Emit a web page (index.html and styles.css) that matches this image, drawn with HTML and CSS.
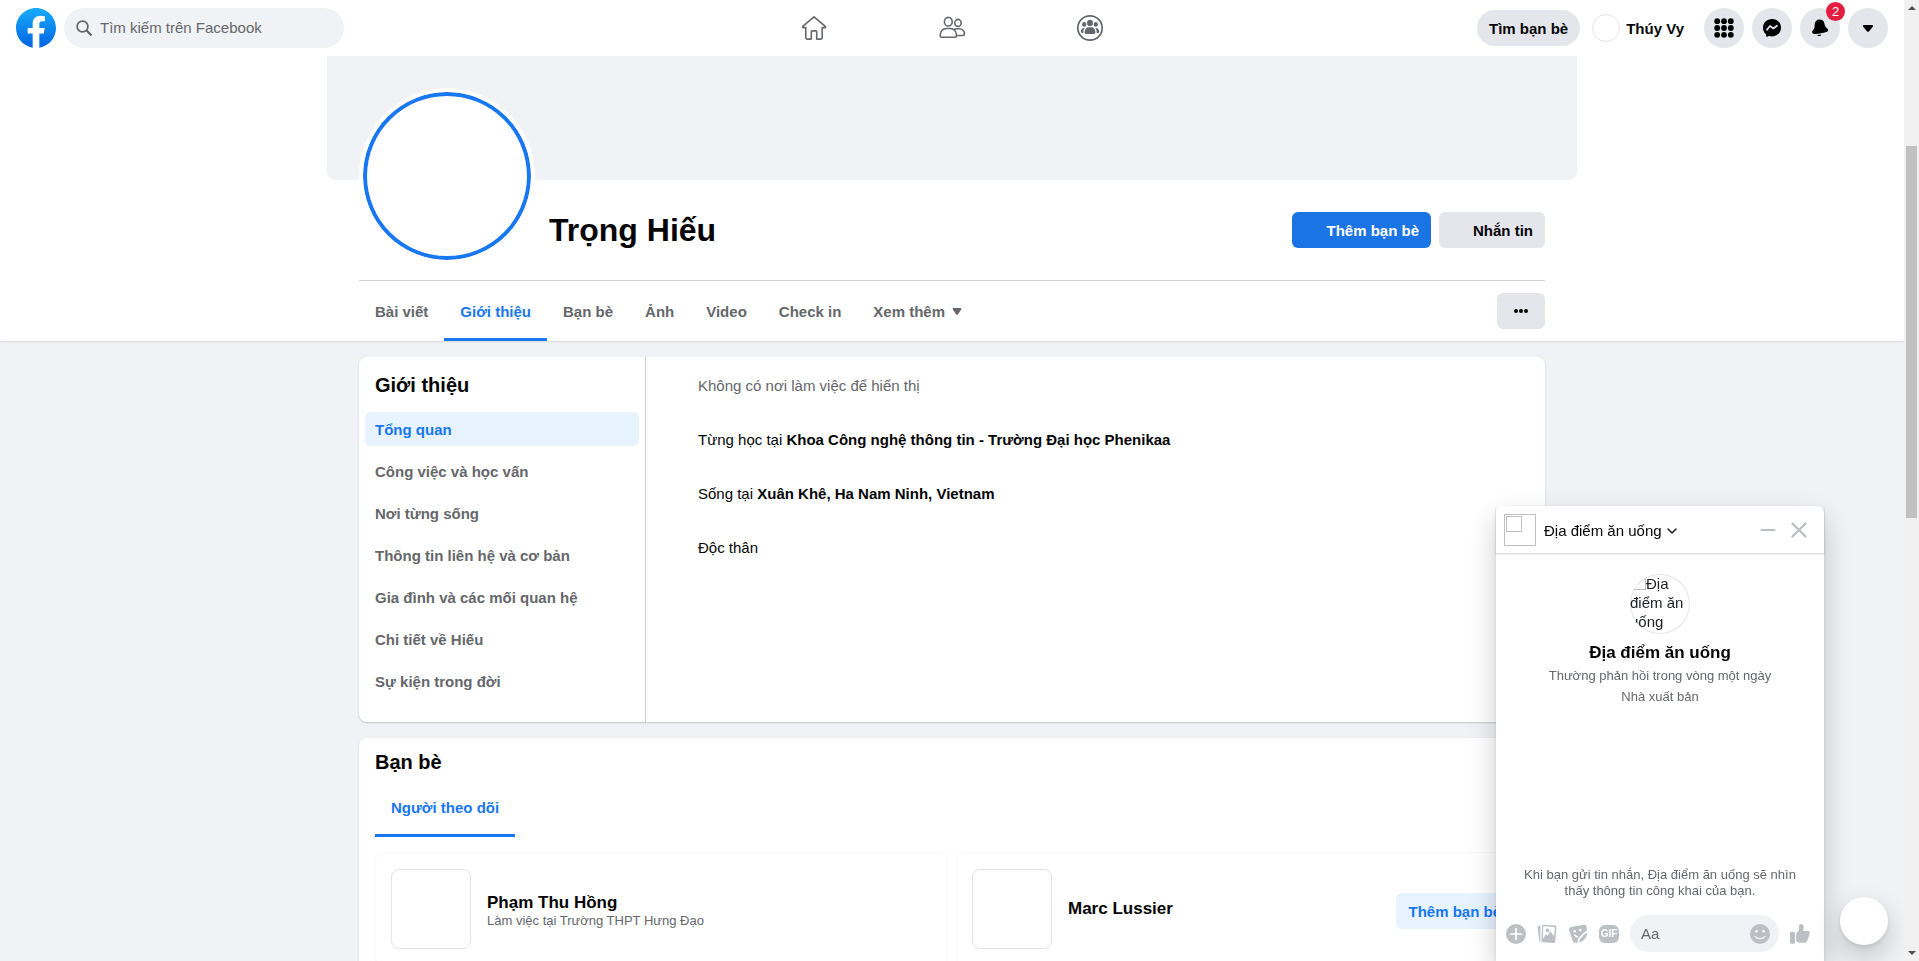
FILE: index.html
```html
<!DOCTYPE html>
<html lang="vi">
<head>
<meta charset="utf-8">
<meta name="viewport" content="width=device-width, initial-scale=1">
<title>Trọng Hiếu | Facebook</title>
<link rel="stylesheet" href="styles.css">
</head>
<body>
<div class="app">
  <div class="page">
    <header class="topbar">
      <div class="topbar-left">
        <a href="#" class="logo" aria-label="Facebook">
          <svg viewBox="0 0 36 36" width="40" height="40">
            <defs><linearGradient id="brand" x1="0" y1="0" x2="0" y2="1"><stop offset="0" stop-color="#18acfe"/><stop offset="1" stop-color="#0163e0"/></linearGradient></defs>
            <path fill="url(#brand)" d="M15 35.8C6.500 34.300 0 26.900 0 18 0 8.100 8.100 0 18 0s18 8.100 18 18c0 8.900-6.500 16.300-15 17.800l-1-.8h-4l-1 .8z"/>
            <path fill="#fff" d="M25 23l.8-5H21v-3.500c0-1.400.5-2.500 2.700-2.500H26V7.400c-1.300-.2-2.700-.4-4-.4-4.100 0-7 2.500-7 7v4h-4.500v5H15v12.700c1 .2 2 .3 3 .3s2-.1 3-.3V23h4z"/>
          </svg>
        </a>
        <label class="search">
          <svg viewBox="0 0 16 16" width="16" height="16" fill="none" stroke="#65676b" stroke-width="1.700" stroke-linecap="round"><ellipse cx="6.500" cy="6.500" rx="5.400" ry="5.400"/><path d="M10.800 10.800l4 4" stroke-width="2.300"/></svg>
          <input type="text" placeholder="Tìm kiếm trên Facebook" aria-label="Tìm kiếm trên Facebook">
        </label>
      </div>
      <nav class="topnav">
        <a href="#" aria-label="Trang chủ"><svg viewBox="0 0 28 28" width="28" height="28" fill="none" stroke="#65676b" stroke-width="1.600" stroke-linejoin="round"><path d="M14 2.800L2.700 12.400c-.5.400-.2 1.200.4 1.200h2.700v10.200c0 .9.400 1.300 1.300 1.300h4.200v-7.300c0-.6.300-.9.900-.9h3.600c.6 0 .9.300.9.900v7.300h4.200c.9 0 1.300-.4 1.300-1.300V13.600h2.700c.6 0 .9-.8.4-1.200z"/></svg></a>
        <a href="#" aria-label="Bạn bè"><svg viewBox="0 0 28 28" width="28" height="28" fill="none" stroke="#65676b" stroke-width="1.600"><ellipse cx="10.300" cy="7.700" rx="3.900" ry="4.300"/><ellipse cx="20" cy="8.900" rx="3.200" ry="3.500"/><path d="M2.200 21.500c0-4.500 3-7 6.200-7h3.900c3.200 0 6.200 2.500 6.200 7 0 1-.7 1.700-1.700 1.700H3.900c-1 0-1.700-.7-1.700-1.700zM16.500 15.300c.8-.5 1.600-.6 2.400-.6h2.300c2.700 0 5.200 2 5.200 5.400 0 .9-.6 1.400-1.400 1.400h-6.500"/></svg></a>
        <a href="#" aria-label="Nhóm"><svg viewBox="0 0 28 28" width="28" height="28" fill="#65676b"><circle cx="14" cy="14" r="12.200" fill="none" stroke="#65676b" stroke-width="1.700"/><ellipse cx="14" cy="8.900" rx="2.900" ry="3.200"/><ellipse cx="8.200" cy="10.400" rx="2.100" ry="2.300"/><ellipse cx="19.800" cy="10.400" rx="2.100" ry="2.300"/><path d="M8.600 18.300c0-2.900 1.900-5 4.200-5h2.400c2.300 0 4.200 2.100 4.200 5 0 1-.6 1.700-1.500 1.700h-7.800c-.9 0-1.500-.7-1.500-1.700zM8.600 14c-.9 1.200-1.300 2.700-1.200 4.900H6c-.8 0-1.300-.4-1.200-1.200.1-2.300 1.600-4 3.800-3.700zM19.400 14c.9 1.200 1.300 2.700 1.200 4.900H22c.8 0 1.300-.4 1.200-1.200-.1-2.300-1.600-4-3.800-3.700z"/></svg></a>
      </nav>
      <div class="topbar-right">
        <button class="find">Tìm bạn bè</button>
        <a href="#" class="me"><span class="me-pic"></span><span class="me-name">Thúy Vy</span></a>
        <div class="actions">
          <button class="round" aria-label="Menu"><svg viewBox="0 0 20 20" width="20" height="20"><g id="dots-row"><circle cx="3.200" cy="3.200" r="2.900"/><circle cx="10" cy="3.200" r="2.900"/><circle cx="16.800" cy="3.200" r="2.900"/></g><use href="#dots-row" y="6.800"/><use href="#dots-row" y="13.600"/></svg></button>
          <button class="round" aria-label="Messenger"><svg viewBox="0 0 20 20" width="20" height="20"><path d="M10 1C4.900 1 1 4.700 1 9.700c0 2.600 1.100 4.900 2.800 6.400.2.100.3.300.3.500v1.600c.1.500.6.800 1 .6l1.800-.8c.2-.1.300-.1.500 0 .8.300 1.700.4 2.600.4 5.100 0 9-3.700 9-8.700S15.100 1 10 1z"/><path fill="none" stroke="#e4e6eb" stroke-width="1.700" stroke-linejoin="round" stroke-linecap="round" d="M5 11.800l3-3.900 3.300 2.600L15 7.700"/></svg></button>
          <span class="badge-wrap"><button class="round" aria-label="Thông báo"><svg viewBox="0 0 20 20" width="20" height="20"><path d="M4.700 6.500C4.800 3.500 6.700 1.500 9.400 1.500c2.400 0 4.200 1 4.800 3.200.5 1.700.6 3.300 1.700 4.600.9 1 2 1.500 2.200 2.500.3 1.200-.6 1.900-1.800 2.300-3.500 1.100-7.900 2-11.300 1.900-1.800 0-2.900-.7-2.800-2.100.1-1.200 1-1.700 1.700-2.900.8-1.400.7-2.800.8-4.500zM7.200 17l4-.6c-.2 1.100-.8 1.600-1.900 1.700-1 .1-1.700-.2-2.100-1.100z"/></svg></button><span class="badge">2</span></span>
          <button class="round" aria-label="Tài khoản"><svg viewBox="0 0 20 20" width="20" height="20"><path d="M6 7h8c1 0 1.400 1 .8 1.700l-3.900 4.700c-.5.500-1.300.5-1.800 0L5.200 8.700C4.600 8 5 7 6 7z"/></svg></button>
        </div>
      </div>
    </header>

    <section class="profile">
      <div class="cover"></div>
      <div class="column identity">
        <div class="portrait"></div>
        <h1>Trọng Hiếu</h1>
        <div class="identity-actions">
          <button class="btn primary"><span class="icon-slot"></span>Thêm bạn bè</button>
          <button class="btn"><span class="icon-slot"></span>Nhắn tin</button>
        </div>
      </div>
      <div class="column tabs-row">
        <nav class="tabs">
          <a href="#">Bài viết</a>
          <a href="#" class="active">Giới thiệu</a>
          <a href="#">Bạn bè</a>
          <a href="#">Ảnh</a>
          <a href="#">Video</a>
          <a href="#">Check in</a>
          <a href="#">Xem thêm <svg viewBox="0 0 10 10" width="10" height="10" fill="#65676b"><path d="M1.500 1h7c.8 0 1.200.8.700 1.400L5.800 7.500c-.4.600-1.200.6-1.600 0L.8 2.400C.3 1.800.7 1 1.500 1z"/></svg></a>
        </nav>
        <button class="btn more" aria-label="Xem thêm"><svg viewBox="0 0 16 16" width="16" height="16"><circle cx="3" cy="8" r="2"/><circle cx="8" cy="8" r="2"/><circle cx="13" cy="8" r="2"/></svg></button>
      </div>
    </section>

    <main class="column content">
      <section class="card about">
        <nav class="about-nav">
          <h2>Giới thiệu</h2>
          <a href="#" class="active">Tổng quan</a>
          <a href="#">Công việc và học vấn</a>
          <a href="#">Nơi từng sống</a>
          <a href="#">Thông tin liên hệ và cơ bản</a>
          <a href="#">Gia đình và các mối quan hệ</a>
          <a href="#">Chi tiết về Hiếu</a>
          <a href="#">Sự kiện trong đời</a>
        </nav>
        <div class="facts">
          <p class="muted">Không có nơi làm việc để hiển thị</p>
          <p>Từng học tại <b>Khoa Công nghệ thông tin - Trường Đại học Phenikaa</b></p>
          <p>Sống tại <b>Xuân Khê, Ha Nam Ninh, Vietnam</b></p>
          <p>Độc thân</p>
        </div>
      </section>
      <section class="card friends">
        <h2>Bạn bè</h2>
        <nav class="tabs sub"><a href="#" class="active">Người theo dõi</a></nav>
        <div class="people">
          <article class="person">
            <div class="thumb"></div>
            <div class="person-text detailed"><h3>Phạm Thu Hồng</h3><p>Làm việc tại Trường THPT Hưng Đạo</p></div>
          </article>
          <article class="person">
            <div class="thumb"></div>
            <div class="person-text"><h3>Marc Lussier</h3></div>
            <button class="btn soft">Thêm bạn bè</button>
          </article>
        </div>
      </section>
    </main>

    <section class="chat" aria-label="Địa điểm ăn uống">
      <header class="chat-head">
        <span class="chat-pic"><span class="blank"></span></span>
        <button class="chat-title">Địa điểm ăn uống <svg viewBox="0 0 10 6" width="10" height="6" fill="none" stroke="#1c1e21" stroke-width="1.500" stroke-linecap="round" stroke-linejoin="round"><path d="M1 1l4 4 4-4"/></svg></button>
        <button class="plain" aria-label="Thu nhỏ"><svg viewBox="0 0 16 16" width="16" height="16" stroke="#bcc0c4" stroke-width="2.200" stroke-linecap="round"><path d="M1.500 8h13"/></svg></button>
        <button class="plain" aria-label="Đóng"><svg viewBox="0 0 16 16" width="16" height="16" stroke="#bcc0c4" stroke-width="2.400" stroke-linecap="round"><path d="M1.500 1.500l13 13M14.500 1.500l-13 13"/></svg></button>
      </header>
      <div class="chat-body">
        <div class="chat-avatar"><span class="blank"></span>Địa điểm ăn uống</div>
        <h3>Địa điểm ăn uống</h3>
        <p>Thường phản hồi trong vòng một ngày</p>
        <p>Nhà xuất bản</p>
        <p class="notice">Khi bạn gửi tin nhắn, Địa điểm ăn uống sẽ nhìn thấy thông tin công khai của bạn.</p>
      </div>
      <footer class="composer">
        <button class="plain" aria-label="Thêm"><svg viewBox="0 0 20 20" width="20" height="20"><circle cx="10" cy="10" r="10" fill="#bcc0c4"/><path d="M10 4.500v11M4.500 10h11" stroke="#fff" stroke-width="1.700" stroke-linecap="round"/></svg></button>
        <button class="plain" aria-label="Ảnh"><svg viewBox="0 0 20 20" width="20" height="20"><path fill="#bcc0c4" d="M3.300 1.600L1.800 1.800C1 2 .6 2.500.7 3.300l1.500 14c.1.700.5 1 1.100 1zM6.600.8L17.900 1.600c1 .1 1.600.8 1.500 1.800l-1.100 14c-.1 1-.8 1.500-1.700 1.500L5.900 18.300c-1-.1-1.600-.7-1.500-1.700L5 2.300C5 1.300 5.600.8 6.600.8z"/><path fill="#fff" d="M6.700 2.300L17 3c.6 0 .9.400.8 1l-.6 8.300-3.300-4.200c-.4-.4-.9-.4-1.200.1l-2.200 3.600-1.100-1.200c-.3-.3-.7-.3-.9.100L6 14.800 6.100 3c0-.4.200-.7.600-.7z"/><circle cx="10.500" cy="6.300" r="1.900" fill="#bcc0c4"/></svg></button>
        <button class="plain" aria-label="Nhãn dán"><svg viewBox="0 0 20 20" width="20" height="20"><path fill="#bcc0c4" d="M3.500 2.800L15.500.9c1.700-.3 2.900.5 3.100 2.100l.3 3.300c-2.100 1.700-5.400 4.400-8.900 8.400l-.4 4H7.700c-1.900 0-3-1-3.300-2.700L1.100 6.200C.8 4.300 1.700 3.100 3.500 2.800zM19 8.300c.1 1.500-.1 3.200-.8 4.500-1.500 2.700-3.500 4.700-6.600 5.600-.2-.9-.1-1.900.2-2.800 2-2.300 4.200-4.900 7.200-7.300z"/><g fill="#fff"><circle cx="6.600" cy="7.300" r="1.300"/><circle cx="12.300" cy="6.100" r="1.300"/></g><path fill="none" stroke="#fff" stroke-width="1.400" stroke-linecap="round" d="M6.500 10.900c.7 1.200 1.700 1.800 3.100 1.900"/></svg></button>
        <button class="plain" aria-label="Ảnh GIF"><span class="gif">GIF</span></button>
        <label class="message">
          <input type="text" placeholder="Aa" aria-label="Aa">
          <svg viewBox="0 0 20 20" width="20" height="20"><circle cx="10" cy="10" r="10" fill="#bcc0c4"/><circle cx="6.500" cy="7.300" r="1.500" fill="#f0f2f5"/><circle cx="13.500" cy="7.300" r="1.500" fill="#f0f2f5"/><path d="M5 12.500c2.700 2.900 7.300 2.900 10 0" fill="none" stroke="#f0f2f5" stroke-width="1.600" stroke-linecap="round"/></svg>
        </label>
        <button class="plain" aria-label="Thích"><svg viewBox="0 0 20 20" width="20" height="20" fill="#bcc0c4"><path d="M1.400 8h2.400c.8 0 1.200.5 1.200 1.200v9.400c0 .8-.4 1.200-1.200 1.200H1.400C.5 19.800 0 19.400 0 18.600V9.200C0 8.500.5 8 1.400 8zM6.200 10.200c0-1 .6-1.600 1.400-2.300C8.900 6.700 9 5 9 2.600 9 .9 9.700 0 11 0c2 0 2.700 1.600 2.700 3.600 0 1.400-.4 2.500-.7 3.400h4.900c1.200 0 2.100.8 2.100 1.900 0 .8-.3 1.300-.9 1.700.4 1.100.1 2.300-.9 2.900.3 1.200-.1 2.300-1.100 2.800.1 1.600-.8 2.500-2.600 2.500h-2.800c-2.300 0-4-.6-5.500-1.600z"/></svg></button>
      </footer>
    </section>
    <button class="compose" aria-label="Tin nhắn mới"></button>
  </div>
  <div class="scrollbar" aria-hidden="true">
    <span class="arrow up"></span>
    <span class="thumb-bar"></span>
    <span class="arrow down"></span>
  </div>
</div>
</body>
</html>
```
FILE: styles.css
```css
* { box-sizing: border-box; }
body {
  margin: 0;
  overflow: hidden;
  background: #f0f2f5;
  color: #050505;
  font: 15px/20px "Liberation Sans", Arial, sans-serif;
}
h1, h2, h3, p { margin: 0; }
a { color: inherit; text-decoration: none; }
button, input { font: inherit; color: inherit; border: 0; padding: 0; background: none; }
button { cursor: pointer; }
input { outline: 0; width: 100%; min-width: 0; }
input::placeholder { color: #65676b; opacity: 1; }
svg { display: block; flex: none; }

.app { display: grid; grid-template-columns: minmax(0, 1fr) 15px; height: 100vh; }
.page { position: relative; overflow: hidden; }
.column { width: 100%; max-width: 1186px; margin: 0 auto; }

/* top bar */
.topbar {
  display: grid;
  grid-template-columns: 1fr auto 1fr;
  align-items: center;
  height: 56px;
  padding: 0 16px;
  background: #fff;
}
.topbar-left { display: flex; gap: 8px; }
.search {
  display: flex;
  align-items: center;
  gap: 8px;
  width: 280px;
  height: 40px;
  padding: 0 12px;
  border-radius: 20px;
  background: #f0f2f5;
}
.search input { flex: 1; }
.topnav { display: flex; gap: 8px; }
.topnav a { display: flex; justify-content: center; width: 130px; }
.topbar-right { display: flex; align-items: center; justify-content: flex-end; }
.find { height: 36px; padding: 2px 12px 0; border-radius: 18px; background: #e4e6eb; font-weight: bold; }
.me { display: flex; align-items: center; gap: 6px; margin: 0 20px 0 12px; font-weight: bold; }
.me-name { padding-top: 2px; }
.me-pic { width: 28px; height: 28px; border: 1px solid #e5e5e5; border-radius: 50%; }
.actions { display: flex; gap: 8px; }
.round {
  display: flex;
  align-items: center;
  justify-content: center;
  width: 40px;
  height: 40px;
  border-radius: 50%;
  background: #e4e6eb;
}
.badge-wrap { position: relative; }
.badge {
  position: absolute;
  top: -6px;
  right: -5px;
  width: 19px;
  height: 19px;
  border-radius: 50%;
  background: #e41e3f;
  color: #fff;
  font-size: 13px;
  line-height: 19px;
  text-align: center;
}

/* profile */
.profile { background: #fff; box-shadow: 0 1px 2px rgba(0, 0, 0, .1); }
.cover { max-width: 1250px; height: 124px; margin: 0 auto; border-radius: 0 0 8px 8px; background: #f0f2f5; }
.identity {
  position: relative;
  display: flex;
  align-items: center;
  justify-content: space-between;
  height: 101px;
  padding-left: 190px;
  border-bottom: 1px solid #ced0d4;
}
.portrait {
  position: absolute;
  left: 0;
  bottom: 16px;
  width: 176px;
  height: 176px;
  border: 4px solid #fff;
  border-radius: 50%;
  background: #fff;
  box-shadow: inset 0 0 0 4px #1877f2;
}
h1 { font-size: 32px; line-height: 38px; }
.identity-actions { display: flex; gap: 8px; }
.btn {
  display: flex;
  align-items: center;
  justify-content: center;
  gap: 6px;
  height: 36px;
  padding: 2px 12px 0;
  border-radius: 6px;
  background: #e4e6eb;
  font-weight: bold;
}
.primary { background: #1b74e4; color: #fff; }
.soft { margin-top: 4px; background: #e7f3ff; color: #1877f2; }
.icon-slot { width: 16px; height: 16px; }
.tabs-row { display: flex; align-items: center; justify-content: space-between; }
.tabs { display: flex; }
.tabs a {
  display: flex;
  align-items: center;
  gap: 7px;
  height: 60px;
  padding: 5px 16px 0;
  border-bottom: 3px solid transparent;
  color: #65676b;
  font-weight: bold;
}
.tabs .active { border-color: #1877f2; color: #1877f2; }
.more { width: 48px; padding-top: 0; }

/* cards */
.content { display: grid; gap: 16px; padding-top: 16px; }
.card { border-radius: 8px; background: #fff; box-shadow: 0 1px 2px rgba(0, 0, 0, .2); }
h2 { font-size: 20px; line-height: 24px; }
.about { display: grid; grid-template-columns: 287px 1fr; min-height: 365px; }
.about-nav { display: flex; flex-direction: column; gap: 8px; padding: 16px 6px; border-right: 1px solid #ced0d4; }
.about-nav h2 { padding: 0 10px; margin-bottom: 7px; }
.about-nav a { padding: 8px 10px 6px; border-radius: 6px; color: #65676b; font-weight: bold; }
.about-nav .active { background: #e7f3ff; color: #1877f2; }
.facts { display: flex; flex-direction: column; gap: 34px; padding: 19px 52px; }
.muted { color: #65676b; }
.friends { padding: 12px 16px; }
.sub { padding-top: 3px; }
.people { display: grid; grid-template-columns: 1fr 1fr; gap: 8px; padding-top: 15px; }
.person {
  display: flex;
  align-items: center;
  gap: 16px;
  height: 114px;
  padding: 0 15px;
  border: 1px solid #f7f8fa;
  border-radius: 8px;
}
.thumb { width: 80px; height: 80px; border: 1px solid #e5e5e5; border-radius: 8px; }
.person-text { flex: 1; }
.detailed { padding-top: 4px; }
h3 { font-size: 17px; line-height: 20px; }
.person-text p { color: #65676b; font-size: 13px; line-height: 16px; }

/* chat window */
.chat {
  position: fixed;
  right: 95px;
  bottom: 0;
  display: flex;
  flex-direction: column;
  width: 328px;
  height: 455px;
  border-radius: 8px 8px 0 0;
  background: #fff;
  box-shadow: 0 12px 28px rgba(0, 0, 0, .2), 0 2px 4px rgba(0, 0, 0, .1);
}
.chat-head { display: flex; align-items: center; height: 47px; padding: 1px 17px 0 8px; box-shadow: 0 1px 2px rgba(0, 0, 0, .2); }
.chat-pic { width: 32px; height: 32px; padding: 1px; border: 1px solid #c0c0c0; }
.blank { display: block; width: 16px; height: 16px; border: 1px solid #c0c0c0; }
.chat-title { display: flex; align-items: center; gap: 5px; margin: 0 auto 0 8px; padding-top: 2px; }
.plain { flex: none; }
.chat-head .plain + .plain { margin-left: 15px; }
.chat-body { flex: 1; display: flex; flex-direction: column; align-items: center; padding: 21px 24px 0; color: #65676b; font-size: 13px; line-height: 21px; text-align: center; }
.chat-avatar {
  width: 60px;
  height: 60px;
  border-radius: 50%;
  overflow: hidden;
  color: #1c1e21;
  font-size: 15px;
  line-height: 19px;
  text-align: left;
  box-shadow: inset 0 0 0 1px #e5e5e5;
}
.chat-avatar .blank { float: left; }
.chat-body h3 { margin: 9px 0 2px; color: #050505; }
.chat-body .notice { margin: auto 0 16px; line-height: 16px; }
.composer { display: flex; align-items: center; gap: 11px; padding: 0 14px 9px 10px; }
.message { display: flex; align-items: center; flex: 1; min-width: 0; height: 37px; padding: 0 9px 0 11px; border-radius: 19px; background: #f0f2f5; }
.message input { flex: 1; }
.gif {
  display: block;
  width: 20px;
  height: 18px;
  border-radius: 6px;
  background: #bcc0c4;
  color: #fff;
  font-size: 10px;
  line-height: 18px;
  font-weight: bold;
  text-align: center;
}
.compose {
  position: fixed;
  right: 31px;
  bottom: 16px;
  width: 48px;
  height: 48px;
  border-radius: 50%;
  background: #fff;
  box-shadow: 0 2px 4px rgba(0, 0, 0, .1), 0 12px 28px rgba(0, 0, 0, .2);
}

/* scrollbar */
.scrollbar { position: relative; background: #f1f1f1; }
.thumb-bar { position: absolute; top: 15.2%; left: 2px; right: 2px; height: 38.7%; background: #c1c1c1; }
.arrow { position: absolute; left: 4px; border: 4px solid transparent; }
.up { top: 2px; border-bottom-color: #505050; }
.down { bottom: 2px; border-top-color: #505050; }
```
